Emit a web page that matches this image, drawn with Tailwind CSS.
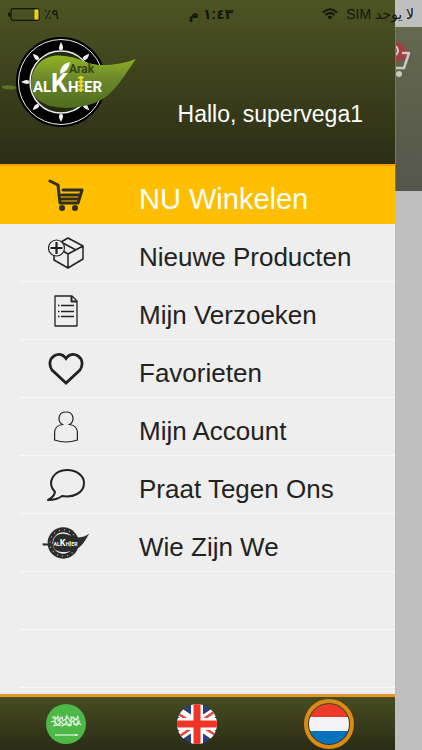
<!DOCTYPE html>
<html lang="nl">
<head>
    <meta charset="UTF-8">
    <meta name="viewport" content="width=device-width, initial-scale=1.0">
    <title>Arak Alkhier</title>
    <script src="https://cdn.jsdelivr.net/npm/@tailwindcss/browser@4"></script>
</head>
<body class="relative flex min-h-screen overflow-x-hidden bg-[#bebebe] font-['Liberation_Sans',Arial,sans-serif]">

    <!-- Status bar -->
    <div class="absolute inset-x-0 top-0 z-10 grid h-7 grid-cols-3 items-center px-2 text-[#15160c] font-['Liberation_Sans','DejaVu_Sans',sans-serif]">
        <div class="flex items-center gap-1">
            <svg class="h-[13px] w-8" viewBox="0 0 32 13" fill="none">
                <rect x="3" y=".7" width="28" height="11.6" rx="2" stroke="#15160c" stroke-width="1.2"/>
                <path d="M2 4Q0 4 0 6.500T2 9Z" fill="#15160c"/>
                <rect x="26.500" y="1.500" width="4" height="10" fill="#f4cf16"/>
            </svg>
            <span dir="rtl" class="text-sm">٩٪</span>
        </div>
        <div dir="rtl" class="text-center text-sm font-bold">١:٤٣ م</div>
        <div dir="rtl" class="flex items-center gap-2 text-sm whitespace-nowrap">
            <span>لا يوجد SIM</span>
            <svg class="h-3 w-4" viewBox="0 0 16 12" fill="none" stroke="currentColor" stroke-width="2">
                <path d="M1 4.500Q8-2 15 4.500M3.500 7Q8 3 12.500 7"/>
                <path d="M5.500 9Q8 6.500 10.500 9L8 11.700Z" fill="currentColor" stroke="none"/>
            </svg>
        </div>
    </div>

    <!-- Drawer -->
    <div class="flex flex-1 flex-col bg-[#eeeeee]">
        <header class="flex h-[164px] items-start justify-between bg-linear-to-b from-[#4d5423] to-[#2c2e15] pr-8">
            <svg class="mt-9 h-[92px] w-[138px] shrink-0" viewBox="0 36 138 92" role="img" aria-label="Arak Alkhier">
                <defs>
                    <linearGradient id="leaf" x1="0" y1="0" x2="0" y2="1">
                        <stop offset="0" stop-color="#92b421"/>
                        <stop offset=".45" stop-color="#6a882b"/>
                        <stop offset="1" stop-color="#4f6b1f"/>
                    </linearGradient>
                    <path id="seed" d="M61 42Q57.500 49 60 50L62 50Q64.500 48 61 42Z" fill="#eee"/>
                </defs>
                <circle cx="61" cy="82" r="37.500" fill="none" stroke="#000" stroke-width="15"/>
                <circle cx="61" cy="82" r="42.500" fill="none" stroke="#eee" stroke-width="1"/>
                <circle cx="61" cy="82" r="31" fill="#232b10" stroke="#eee" stroke-width="1.500"/>
                <use href="#seed"/>
                <use href="#seed" transform="rotate(45 61 82)"/>
                <use href="#seed" transform="rotate(135 61 82)"/>
                <use href="#seed" transform="rotate(180 61 82)"/>
                <use href="#seed" transform="rotate(225 61 82)"/>
                <use href="#seed" transform="rotate(270 61 82)"/>
                <use href="#seed" transform="rotate(315 61 82)"/>
                <path d="M2 86Q12 84 17 88Q11 91 2 88Z" fill="#5c7722"/>
                <path d="M31 85C31 63 47 53 65 56C82 58 87 65 103 65Q120 65 136 59C124 75 115 95 95 103C70 112 32 110 31 85Z" fill="url(#leaf)"/>
                <g font-family="Roboto,sans-serif" font-weight="bold" fill="#fff">
                    <text x="33" y="92" font-size="15">AL</text>
                    <text x="51" y="92" font-size="26">K</text>
                    <text x="68" y="92" font-size="15">H</text>
                    <text x="84" y="92" font-size="15">ER</text>
                    <text x="69" y="73" font-size="12" fill="#33441a">Arak</text>
                </g>
                <path d="M60 74Q60 64 70 62Q69 71 60 74Z" fill="#fff"/>
                <path d="M81 76V92M78.500 77l2.500 2 2.500-2M78.500 81l2.500 2 2.500-2M78.500 85l2.500 2 2.500-2M78.500 89l2.500 2 2.500-2" fill="none" stroke="#edd82a" stroke-width="1.800"/>
            </svg>
            <p class="mt-[98px] text-[23px] leading-8 text-white">Hallo, supervega1</p>
        </header>

        <nav class="flex-1">
            <a href="#winkelen" class="flex h-[60px] items-center border-t-2 border-[#fb9d0b] bg-[#ffbf00] text-white">
                <span class="flex w-[139px] shrink-0 justify-center pr-2">
                    <svg class="h-8 w-9" viewBox="0 0 36 32" fill="none" stroke="#302f1c" stroke-width="3" stroke-linecap="round" stroke-linejoin="round">
                        <path d="M2 2L10 6L12 24H30L34 11H15M14 16H31M14 20H29"/>
                        <circle cx="14" cy="29" r="1.500"/><circle cx="27" cy="29" r="1.500"/>
                    </svg>
                </span>
                <span class="pt-2 text-[29px] leading-8">NU Winkelen</span>
            </a>
            <ul class="text-[26px] leading-8 text-[#222]">
                <li>
                    <a href="#producten" class="flex h-[58px] items-center">
                        <span class="flex w-[139px] shrink-0 justify-center pr-2">
                            <svg class="h-8 w-9" viewBox="0 0 36 32" fill="none" stroke="#222" stroke-width="1.500" stroke-linejoin="round">
                                <path d="M6 9L20 1L35 9V22L20 31L6 23ZM6 9L20 17L35 9M20 17V31M13 5L28 13"/>
                                <circle cx="8.500" cy="11" r="8" fill="#eee" stroke-width="1.200"/>
                                <path d="M8.500 5V17M2.500 11H14.500" stroke-width="2.200"/>
                            </svg>
                        </span>
                        <span class="pt-2">Nieuwe Producten</span>
                    </a>
                    <div class="-mt-px ml-5 h-px bg-[#fafafa]"></div>
                </li>
                <li>
                    <a href="#verzoeken" class="flex h-[58px] items-center">
                        <span class="flex w-[139px] shrink-0 justify-center pr-2">
                            <svg class="h-8 w-6" viewBox="0 0 24 32" fill="none" stroke="#222" stroke-width="1.300" stroke-linejoin="round">
                                <path d="M1 1H18L23 6V31H1Z"/>
                                <path d="M17.500 1V6.500H23" stroke-width="2"/>
                                <path d="M4 10.500H5.500M4 16.500H5.500M4 21.500H5.500M7 10.500H20M7 16.500H20M7 21.500H20"/>
                            </svg>
                        </span>
                        <span class="pt-2">Mijn Verzoeken</span>
                    </a>
                    <div class="-mt-px ml-5 h-px bg-[#fafafa]"></div>
                </li>
                <li>
                    <a href="#favorieten" class="flex h-[58px] items-center">
                        <span class="flex w-[139px] shrink-0 justify-center pr-2">
                            <svg class="h-8 w-9" viewBox="0 0 36 32" fill="none" stroke="#222" stroke-width="2.800">
                                <path d="M18 5.500C14 0 9 1 6 3C1 6 1 13 4 17L18 30L32 17C35 13 35 6 30 3C27 1 22 0 18 5.500Z"/>
                            </svg>
                        </span>
                        <span class="pt-2">Favorieten</span>
                    </a>
                    <div class="-mt-px ml-5 h-px bg-[#fafafa]"></div>
                </li>
                <li>
                    <a href="#account" class="flex h-[58px] items-center">
                        <span class="flex w-[139px] shrink-0 justify-center pr-2">
                            <svg class="h-8 w-6" viewBox="0 0 24 32" fill="none" stroke="#222" stroke-width="1.200">
                                <path d="M8.500 13.500C3 10 4 1 12 1S21 10 15.500 13.500C21 14 23.400 18 23.400 22V29Q12 33 .6 29V22C.6 18 3 14 8.500 13.500Z"/>
                            </svg>
                        </span>
                        <span class="pt-2">Mijn Account</span>
                    </a>
                    <div class="-mt-px ml-5 h-px bg-[#fafafa]"></div>
                </li>
                <li>
                    <a href="#contact" class="flex h-[58px] items-center">
                        <span class="flex w-[139px] shrink-0 justify-center pr-2">
                            <svg class="h-8 w-[38px]" viewBox="0 0 38 32" fill="none" stroke="#222" stroke-width="2" stroke-linejoin="round">
                                <path d="M8 23C-1 13 7 1 20 1C30 1 37 7 37 14C37 24 26 29 15 27Q10 31 1 31Q7 28 8 23Z"/>
                            </svg>
                        </span>
                        <span class="pt-2">Praat Tegen Ons</span>
                    </a>
                    <div class="-mt-px ml-5 h-px bg-[#fafafa]"></div>
                </li>
                <li>
                    <a href="#over" class="flex h-[58px] items-center">
                        <span class="flex w-[139px] shrink-0 justify-center pr-2">
                            <svg class="h-8 w-12" viewBox="0 36 138 92">
                                <circle cx="61" cy="82" r="38" fill="#eee" stroke="#2b2b2b" stroke-width="14"/>
                                <circle cx="61" cy="82" r="38" fill="none" stroke="#aaa" stroke-width="4" stroke-dasharray="3 12"/>
                                <path d="M2 83L32 85C31 63 47 53 65 56C82 58 87 65 103 66Q120 67 136 55C124 75 115 95 91 103C66 112 36 110 31 89H2Z" fill="#2b2b2b"/>
                                <g font-family="Roboto,sans-serif" font-weight="bold" fill="#fff">
                                    <text x="33" y="92" font-size="15">AL</text>
                                    <text x="51" y="92" font-size="26">K</text>
                                    <text x="68" y="92" font-size="15">H</text>
                                    <text x="84" y="92" font-size="15">ER</text>
                                </g>
                                <path d="M81 76V92" stroke="#edd82a" stroke-width="4"/>
                            </svg>
                        </span>
                        <span class="pt-2">Wie Zijn We</span>
                    </a>
                    <div class="-mt-px ml-5 h-px bg-[#fafafa]"></div>
                </li>
            </ul>
            <div class="ml-5 h-[58px] border-b border-[#fafafa]"></div>
            <div class="ml-5 h-[58px] border-b border-[#fafafa]"></div>
        </nav>

        <!-- Language choice -->
        <footer class="grid h-14 grid-cols-3 place-items-center border-t-3 border-[#e7952a] bg-linear-to-b from-[#474d20] to-[#2a2c15]">
            <button type="button" aria-label="Arabisch">
                <svg class="size-10" viewBox="0 0 40 40">
                    <circle cx="20" cy="20" r="20" fill="#4db848"/>
                    <path d="M6 13l4 2 2-3v5l4-4 1 4 4-3v-2l3 5 3-4 3 3 2-4v6M5 18l4-1 2 4 4-3 3 3 3-3 2 3 4-4 2 4 5-4M7 22l5-1 4 1 3-2 4 2 3-1M30 22l3-3 2 2M14 13v8M25 12v9M32 13v7M9 12v9M20 12v9M28 13v8" fill="none" stroke="#e0f4df" stroke-width="1.100"/>
                    <path d="M9 31H32M30 30V32" stroke="#fff" stroke-width="1.200"/>
                </svg>
            </button>
            <button type="button" aria-label="Engels">
                <svg class="size-10" viewBox="0 0 40 40">
                    <clipPath id="round"><circle cx="20" cy="20" r="20"/></clipPath>
                    <g clip-path="url(#round)">
                        <path d="M0 0H40V40H0Z" fill="#293e7c"/>
                        <path d="M-4 4L44 36M-4 36L44 4" stroke="#fff" stroke-width="9"/>
                        <path d="M0 9L16 19M0 34L16 23M24 17L40 6M24 22L40 32" stroke="#ef3e36" stroke-width="2.500"/>
                        <path d="M20 0V40M0 20H40" stroke="#fff" stroke-width="12"/>
                        <path d="M20 0V40M0 20H40" stroke="#ee3427" stroke-width="7"/>
                    </g>
                </svg>
            </button>
            <button type="button" aria-label="Nederlands" aria-pressed="true" class="flex size-[50px] items-center justify-center rounded-full border-4 border-[#d98a17]">
                <svg class="size-10" viewBox="0 0 40 40">
                    <g clip-path="url(#round)">
                        <path d="M0 0H40V13H0Z" fill="#ee3a2b"/>
                        <path d="M0 13H40V27H0Z" fill="#f3f3f7"/>
                        <path d="M0 27H40V40H0Z" fill="#0873bd"/>
                    </g>
                </svg>
            </button>
        </footer>
    </div>

    <!-- Dimmed page behind the drawer -->
    <div class="w-[27px] shrink-0 overflow-hidden pt-[27px]">
        <div class="h-[164px] border-l border-[#74776a] bg-linear-to-b from-[#64684e] to-[#55574a]">
            <svg class="h-14 w-6" viewBox="0 0 24 56" fill="none">
                <circle cx="0" cy="25" r="10" fill="#a04040"/>
                <path d="M0 30H9L11 23" stroke="#a04040" stroke-width="6"/>
                <path d="M0 41H8L13 26H7" stroke="#c9c9c5" stroke-width="2.500" stroke-linecap="round" stroke-linejoin="round"/>
                <path d="M0 19Q4 24 0 28" stroke="#ccc" stroke-width="2"/>
                <circle cx="3" cy="47" r="3" fill="#c9c9c5"/>
            </svg>
        </div>
    </div>

</body>
</html>
